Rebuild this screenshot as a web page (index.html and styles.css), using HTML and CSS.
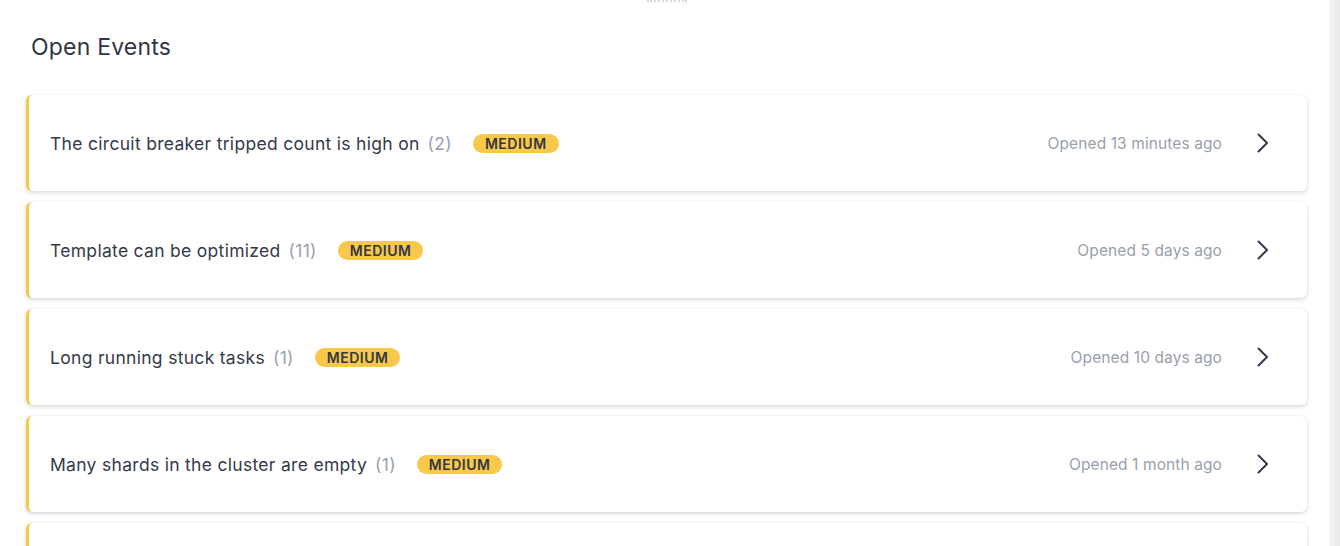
FILE: index.html
```html
<!DOCTYPE html>
<html>
<head>
<meta charset="utf-8">
<link rel="stylesheet" href="styles.css">
</head>
<body>
<div class="page">
  <main class="main">
    <div class="handle"></div>
    <h1 class="title">Open Events</h1>
    <div class="list">
      <div class="card">
        <div class="left"><span class="name">The circuit breaker tripped count is high on</span><span class="count">(2)</span><span class="badge">MEDIUM</span></div>
        <div class="right"><span class="time">Opened 13 minutes ago</span><svg class="chev" width="14" height="20" viewBox="0 0 14 20"><path d="M2.5 1.5 L11 10 L2.5 18.5" fill="none" stroke="#343a4a" stroke-width="2" stroke-linecap="round" stroke-linejoin="round"/></svg></div>
      </div>
      <div class="card">
        <div class="left"><span class="name">Template can be optimized</span><span class="count">(11)</span><span class="badge">MEDIUM</span></div>
        <div class="right"><span class="time">Opened 5 days ago</span><svg class="chev" width="14" height="20" viewBox="0 0 14 20"><path d="M2.5 1.5 L11 10 L2.5 18.5" fill="none" stroke="#343a4a" stroke-width="2" stroke-linecap="round" stroke-linejoin="round"/></svg></div>
      </div>
      <div class="card">
        <div class="left"><span class="name">Long running stuck tasks</span><span class="count">(1)</span><span class="badge">MEDIUM</span></div>
        <div class="right"><span class="time">Opened 10 days ago</span><svg class="chev" width="14" height="20" viewBox="0 0 14 20"><path d="M2.5 1.5 L11 10 L2.5 18.5" fill="none" stroke="#343a4a" stroke-width="2" stroke-linecap="round" stroke-linejoin="round"/></svg></div>
      </div>
      <div class="card">
        <div class="left"><span class="name">Many shards in the cluster are empty</span><span class="count">(1)</span><span class="badge">MEDIUM</span></div>
        <div class="right"><span class="time">Opened 1 month ago</span><svg class="chev" width="14" height="20" viewBox="0 0 14 20"><path d="M2.5 1.5 L11 10 L2.5 18.5" fill="none" stroke="#343a4a" stroke-width="2" stroke-linecap="round" stroke-linejoin="round"/></svg></div>
      </div>
      <div class="card">
        <div class="left"><span class="name">&nbsp;</span></div>
        <div class="right"></div>
      </div>
    </div>
  </main>
  <div class="strip"></div>
</div>
</body>
</html>
```
FILE: styles.css
```css
html, body {
  margin: 0;
  padding: 0;
  background: #ffffff;
  height: 546px;
  overflow: hidden;
  font-family: Inter, "Noto Sans", sans-serif;
  color: #343a4a;
}
.page {
  display: flex;
  height: 546px;
  overflow: hidden;
}
.main {
  flex: 1;
  height: 546px;
  overflow: hidden;
  padding: 0 22px 0 26px;
  position: relative;
}
.handle {
  position: absolute;
  top: 0;
  left: 647px;
  width: 40px;
  height: 0;
  border-top: 2px dotted #d6d9de;
}
.title {
  margin: 33px 0 34px 5px;
  font-size: 23px;
  line-height: 28px;
  font-weight: 400;
  color: #2f3646;
  letter-spacing: 0.2px;
}
.list {
  display: flex;
  flex-direction: column;
  gap: 11px;
  padding-bottom: 10px;
}
.card {
  height: 96px;
  flex-shrink: 0;
  box-sizing: border-box;
  background: #fff;
  border-left: 3px solid #f7c84a;
  border-radius: 6px;
  box-shadow: 0 2px 4px rgba(0,0,0,0.13), 0 0 3px rgba(0,0,0,0.07);
  display: flex;
  align-items: center;
  justify-content: space-between;
  padding: 0 37px 0 21px;
}
.left {
  display: flex;
  align-items: center;
}
.name {
  font-size: 17.5px;
  letter-spacing: 0.3px;
  color: #343a4a;
}
.count {
  font-size: 17.5px;
  letter-spacing: 0.3px;
  color: #9aa1ad;
  margin-left: 8px;
}
.badge {
  margin-left: 21px;
  background: #f7c84a;
  color: #343741;
  font-size: 14px;
  font-weight: 600;
  line-height: 19px;
  height: 19px;
  padding: 0 12px;
  border-radius: 10px;
  letter-spacing: 0.5px;
}
.right {
  display: flex;
  align-items: center;
}
.time {
  font-size: 15.5px;
  letter-spacing: 0.1px;
  color: #98a0ac;
}
.chev {
  margin-left: 34px;
  display: block;
}
.strip {
  width: 11px;
  background: linear-gradient(to right, #f3f3f3, #e9e9e9);
}
```
